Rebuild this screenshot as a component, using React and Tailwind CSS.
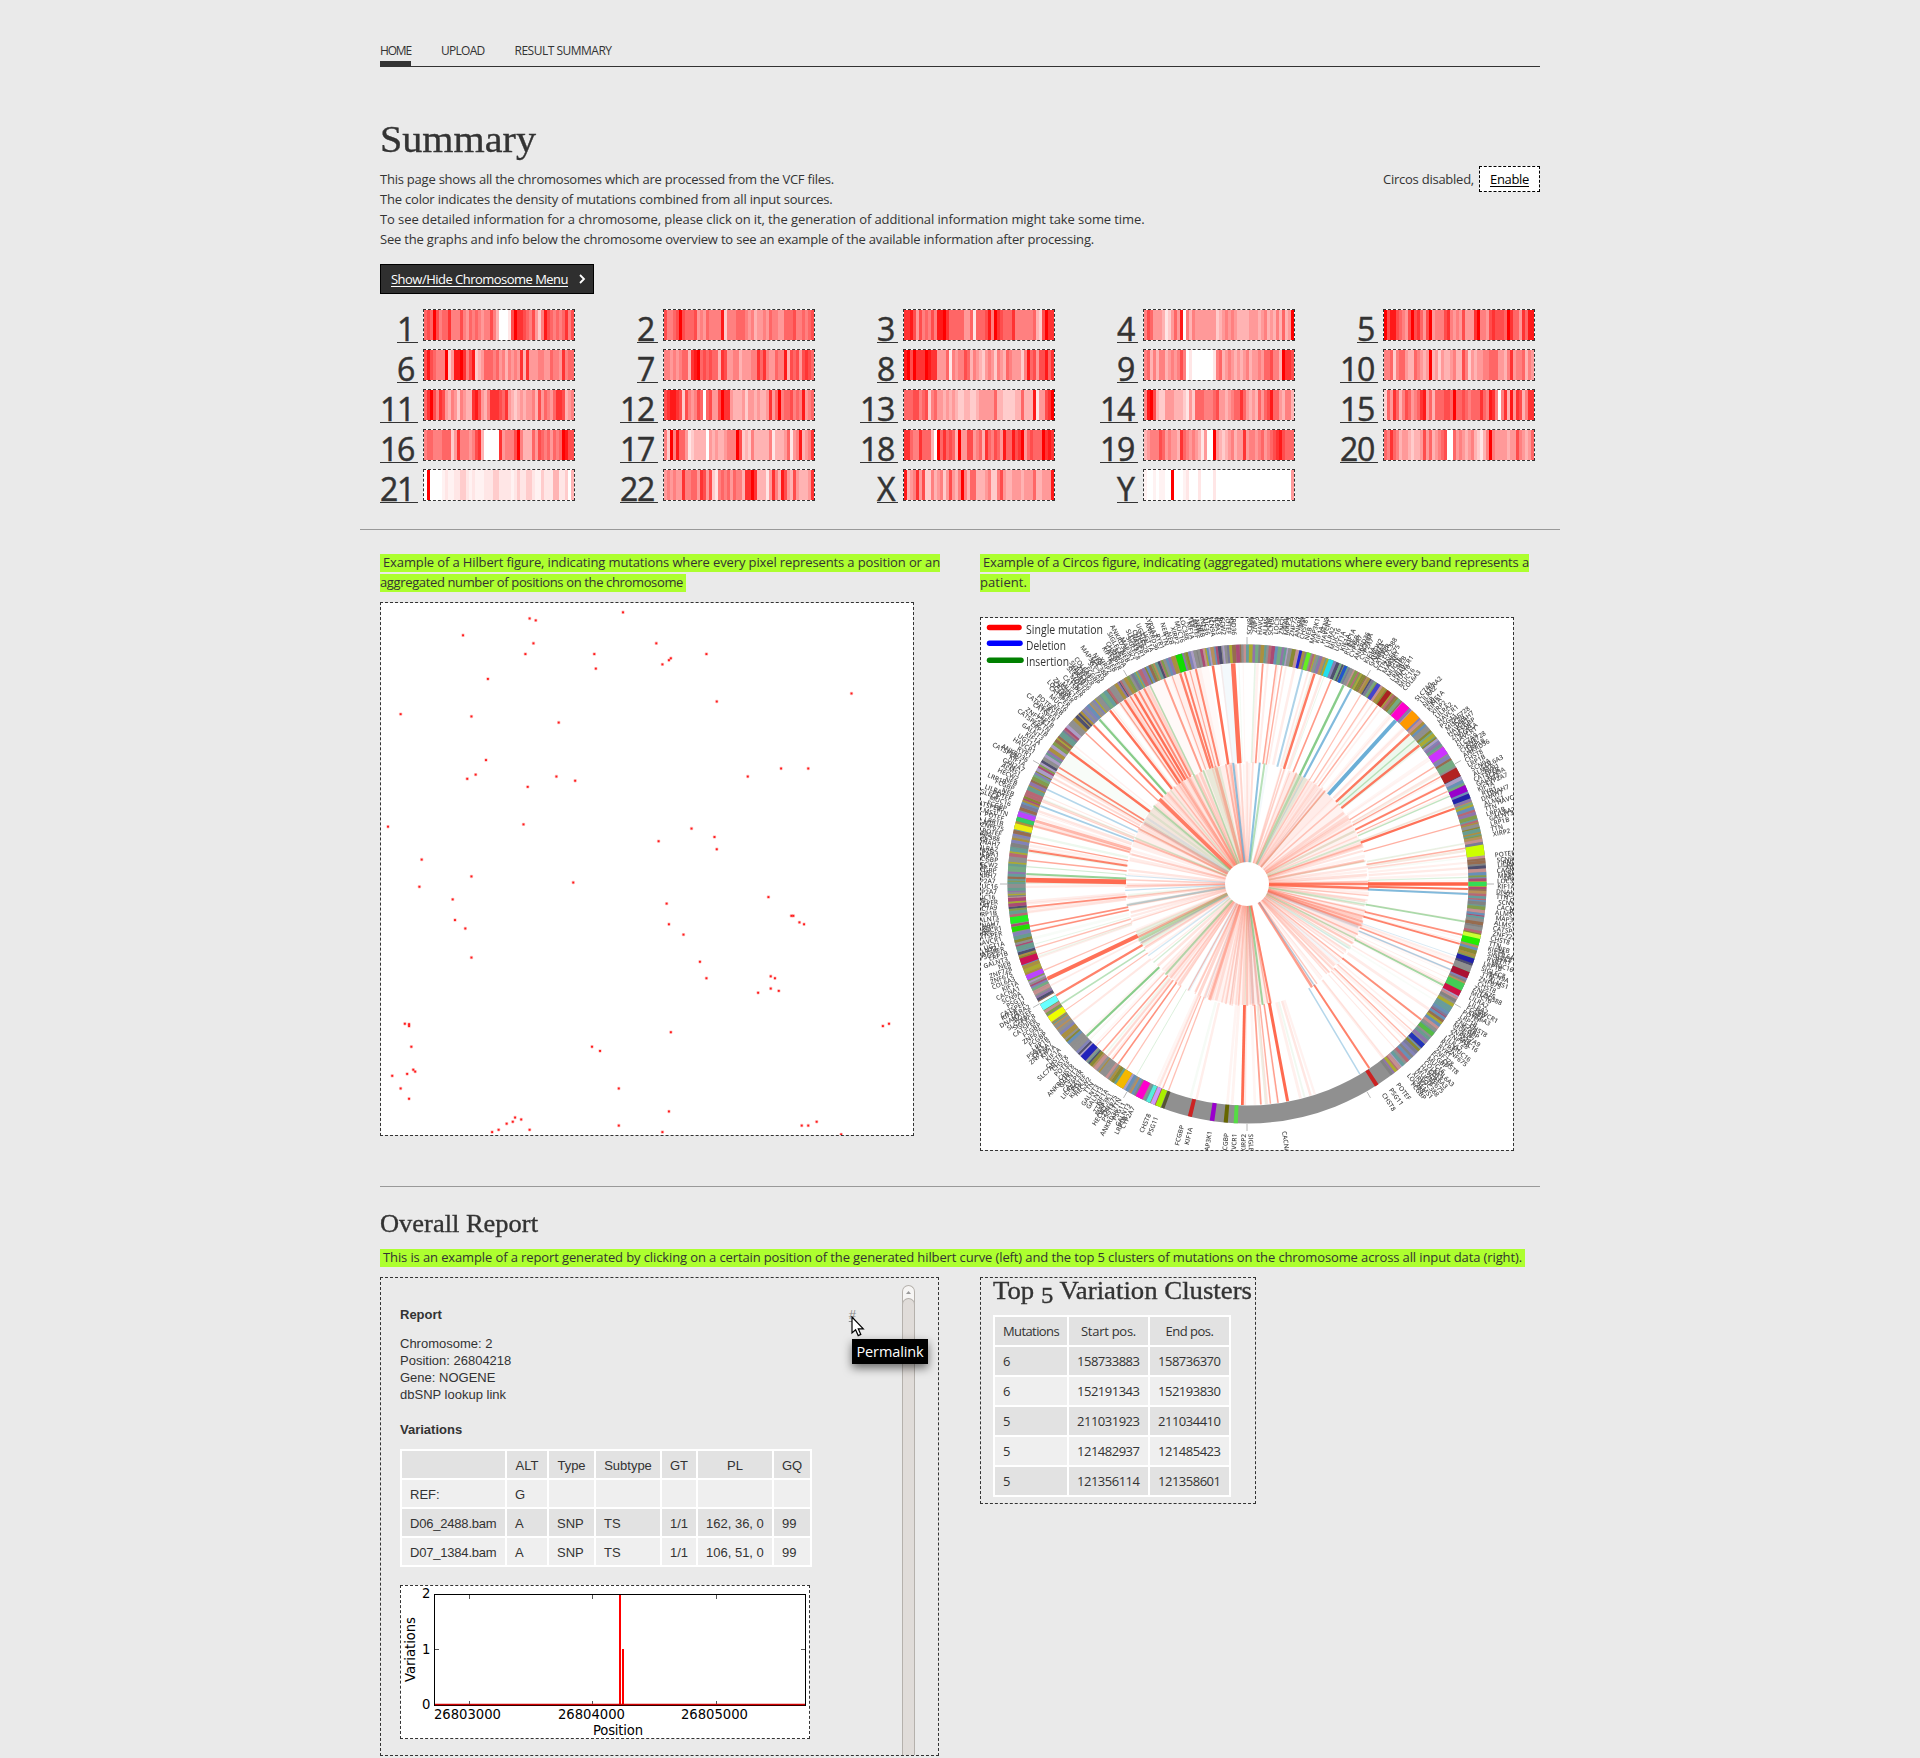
import { useLayoutEffect, useRef } from "react";

const sans = 'font-["Open_Sans",sans-serif]';
const serif = 'font-["Liberation_Serif",serif] [-webkit-text-stroke:0.35px_#333]';

/* Text set to a given measure: spreads the difference over its letters,
   or widens the letters themselves when `stretch` is set. */
function Fit({ w, stretch = false, className = "", children }) {
  const ref = useRef(null);
  useLayoutEffect(() => {
    const el = ref.current;
    const fit = () => {
      el.style.letterSpacing = "0px";
      el.style.transform = "none";
      const natural = el.getBoundingClientRect().width;
      if (stretch) el.style.transform = `scaleX(${w / natural})`;
      else el.style.letterSpacing = (w - natural) / el.textContent.length + "px";
    };
    fit();
    document.fonts?.ready.then(fit);
  }, [w, stretch]);
  return (
    <span ref={ref} className={"inline-block origin-left whitespace-nowrap " + className}>
      {children}
    </span>
  );
}

/* Density of each of the 50 bins: 0 (white) to a (red), "." is half a step. */
const chromosomes = [
  ["1", "676a7 56685 55754 65654 55753 00017 a8876 57425 97656 56857"],
  ["2", "75567 a7666 74546 55559 25556 66545 34454 65544 66675 56567"],
  ["3", "88974 75657 599a8 66666 44616 66795 a8766 68555 55563 27a88"],
  ["4", "57644 43124 64905 35444 44442 34545 43333 44434 53435 3634a"],
  ["5", "a7997 6547a 78647 a4555 78545 47444 8a554 78777 6a866 48699"],
  ["6", "79765 55a24 99a85 79234 66656 45354 54838 44455 44655 48566"],
  ["7", "55454 56638 9a676 76638 74455 34445 58685 44655 93767 47876"],
  ["8", "9a7a8 88a98 84446 15455 76354 32454 25436 54442 59674 77968"],
  ["9", "56353 55345 45750 10000 00015 63454 34345 34454 66755 3a887"],
  ["10", "55625 66433 65434 a3424 33453 37524 34455 66644 35845 56354"],
  ["11", "68a75 87435 42543 38974 35888 76843 23434 45374 65468 87345"],
  ["12", "78998 72754 57606 7447a 88433 34244 34334 846a5 66756 59456"],
  ["13", "66677 56725 64434 34322 33223 44444 63322 22336 33391 4478a"],
  ["14", "59a73 22444 33321 42666 55567 44345 66864 34364 67966 43553"],
  ["15", "26486 35764 56894 63666 776a6 67656 66865 98505 83948 73588"],
  ["16", "56655 56662 48555 45783 00000 84555 7a533 36476 56465 6a977"],
  ["17", "52a59 66412 33330 43433 4555a 72325 33333 51333 46145 93458"],
  ["18", "88655 86663 0a686 763a4 47745 63865 76496 6978a 46766 6a898"],
  ["19", "34555 76454 43865 45431 400a4 32345 34484 55456 45678 97666"],
  ["20", "65865 34432 33474 63456 70064 54345 32135 a5444 43447 54346"],
  ["21", "0a000 0.1.. 11221 .1... 11122 1111. 12112 21..2 11133 11203"],
  ["22", "45454 48556 64874 72156 56465 5388a 83331 48539 74374 33348"],
  ["X", "93458 47225 34524 7435a 53663 33452 25743 34443 44463 34449"],
  ["Y", ".00.0 ..00a 000.1 00010 00010 00000 00000 00000 00000 00004"],
];

function Chromosome({ name, bins }) {
  return (
    <a className="flex h-10 gap-[5px] text-[#333]">
      <span className="flex w-[38px] justify-end">
        <span className="h-[34px] border-b border-[#333] pr-1 text-[32px] leading-[39px] [-webkit-text-stroke:0.5px_#333]">
          <Fit w={name.length * 17}>{name}</Fit>
        </span>
      </span>
      <span className="flex h-8 w-[152px] border border-dashed border-[#333] bg-white">
        {[...bins.replaceAll(" ", "")].map((c, i) => {
          const v = Math.round(255 * (1 - (c === "." ? 0.05 : parseInt(c, 16) / 10)));
          return <i key={i} className="h-full w-[3px]" style={{ background: `rgb(255,${v},${v})` }} />;
        })}
      </span>
    </a>
  );
}

const hits = [
  [661, 189], [417, 205], [433, 210], [243, 249], [427, 270], [406, 298], [586, 298], [590, 336], [748, 270], [786, 309],
  [781, 314], [764, 325], [879, 298], [308, 363], [1258, 401], [906, 422], [80, 455], [265, 461], [493, 477], [303, 575],
  [276, 613], [254, 624], [487, 618], [536, 629], [412, 645], [1074, 597], [1145, 597], [987, 618], [47, 749], [401, 743],
  [840, 754], [754, 787], [900, 776], [906, 808], [135, 835], [265, 879], [129, 906], [531, 895], [216, 939], [1041, 933],
  [222, 993], [249, 1015], [775, 950], [781, 1004], [819, 1031], [1101, 982], [1106, 982], [1122, 999], [1134, 1004],
  [265, 1091], [862, 1102], [879, 1145], [1047, 1140], [1058, 1145], [1047, 1172], [1068, 1178], [1014, 1183], [91, 1264],
  [102, 1265], [102, 1270], [108, 1324], [1340, 1270], [1356, 1264], [786, 1286], [580, 1324], [601, 1335], [113, 1384],
  [118, 1389], [97, 1395], [58, 1400], [80, 1433], [102, 1460], [650, 1433], [781, 1493], [379, 1509], [395, 1514],
  [373, 1520], [357, 1525], [336, 1541], [319, 1547], [417, 1541], [650, 1530], [764, 1547], [1128, 1530], [1145, 1530],
  [1167, 1520], [1231, 1553],
];

function Hilbert() {
  return (
    <svg className="block size-[532px] bg-white" viewBox="28.7 164.6 1390 1390">
      {hits.map(([x, y], i) => (
        <g key={i}>
          <rect x={x - 4.5} y={y - 4.5} width="9" height="9" rx="3" fill="#ff2020" opacity="0.25" />
          <rect x={x - 2.5} y={y - 2.5} width="5" height="5" fill="#ff1a1a" />
        </g>
      ))}
    </svg>
  );
}

const random = (seed) => () => {
  seed = (seed * 16807) % 2147483647;
  return seed / 2147483647;
};
const at = (deg, r) => {
  const a = (deg * Math.PI) / 180;
  return [(266 + r * Math.sin(a)).toFixed(2), (266 - r * Math.cos(a)).toFixed(2)];
};
const RED = "#ff6347";
const BLUE = "#6baed6";
const GREEN = "#74c476";

/* angle (clockwise from the top), colour, width, opacity */
const outerRays = [
  [-3.6, RED, 4.5, 0.9], [-8.9, RED, 2.6, 0.9], [-13.4, RED, 2, 0.75], [-16.4, RED, 2, 0.8], [-17.6, RED, 2.4, 0.8],
  [-15, RED, 1.2, 0.5], [-22, RED, 2, 0.6], [-19.8, RED, 1.2, 0.4], [-27.8, RED, 2, 0.7], [-29.3, RED, 2, 0.7],
  [-30.6, RED, 2.4, 0.9], [-31.9, RED, 1.6, 0.8], [-33.6, RED, 2.4, 0.9], [-35, RED, 1.2, 0.5], [-38.3, RED, 2.4, 0.9],
  [-44, RED, 2, 0.8], [-46.9, RED, 1.5, 0.6], [-53.3, RED, 2.4, 0.9], [-58.2, RED, 1.8, 0.75], [-59.6, RED, 1.4, 0.6],
  [-62.5, RED, 1.2, 0.5], [-73.4, RED, 3, 0.45], [-74.8, RED, 1.8, 0.4], [-79, RED, 1.4, 0.6], [-81.3, RED, 2, 0.8],
  [-83.8, RED, 1.5, 0.55], [-89, RED, 4.6, 0.95], [-96, RED, 1.8, 0.7], [-101, RED, 1.6, 0.7], [-102.4, RED, 1.6, 0.7],
  [-106.8, RED, 1.4, 0.35], [-108.6, RED, 1.2, 0.25], [-113, RED, 1.2, 0.4], [-115.4, RED, 4, 0.9], [-120.3, RED, 2.2, 0.8],
  [-124.8, RED, 1.2, 0.4], [-137, RED, 1.2, 0.3], [-139.2, RED, 1.6, 0.6], [-142.5, RED, 1.3, 0.5], [-144.4, RED, 1.6, 0.7],
  [-147, RED, 1.2, 0.4], [-157.6, RED, 1.2, 0.4], [-159.2, RED, 1.3, 0.4], [-178.8, RED, 2.8, 0.95], [176.4, RED, 1.8, 0.6],
  [173.9, RED, 1.5, 0.5], [171.9, RED, 1.5, 0.6], [169.4, RED, 3, 0.95], [146.4, RED, 2, 0.8], [136, RED, 1.2, 0.25],
  [134, RED, 1.3, 0.4], [131.6, RED, 1.3, 0.3], [127.9, RED, 2, 0.7], [111.2, RED, 1.6, 0.6], [105.7, RED, 1.8, 0.8],
  [103.3, RED, 1.8, 0.7], [90, RED, 3.4, 1], [91.3, RED, 1.8, 0.9], [80.7, RED, 1.4, 0.5], [74.5, RED, 1.4, 0.5],
  [70, RED, 2.2, 0.9], [65.2, RED, 1.3, 0.5], [63.4, RED, 2, 0.8], [61, RED, 1.2, 0.5], [58, RED, 1.3, 0.5],
  [51.2, RED, 2.4, 0.85], [47.3, RED, 2.4, 0.85], [36.2, RED, 1.5, 0.5], [33.3, RED, 1.3, 0.4], [31, RED, 1.2, 0.4],
  [22.4, RED, 1.6, 0.6], [17.8, RED, 2.4, 0.85], [9.1, RED, 1.4, 0.5], [7.6, RED, 1.5, 0.55], [4.1, RED, 1.8, 0.65],
  [-64.7, BLUE, 1.5, 0.5], [-69.3, BLUE, 1.8, 0.6], [92.6, BLUE, 2, 0.85], [42.3, BLUE, 3.8, 1], [28.1, BLUE, 2.2, 0.85],
  [14.5, BLUE, 2, 0.55], [112.8, BLUE, 1.5, 0.55], [149.3, BLUE, 1.5, 0.5], [109, BLUE, 1, 0.25], [-41.9, GREEN, 2.2, 0.85],
  [-26, GREEN, 1.5, 0.5], [-87.4, GREEN, 2, 0.75], [-85.5, GREEN, 1.2, 0.3], [-133.5, GREEN, 2.2, 0.85],
  [-122.8, GREEN, 1.6, 0.5], [117.3, GREEN, 1.8, 0.65], [99.8, GREEN, 1.8, 0.6], [25.9, GREEN, 2.4, 0.85],
  [49.4, GREEN, 1.4, 0.45], [66.6, GREEN, 1.4, 0.45], [88.3, GREEN, 1.2, 0.25], [-150, GREEN, 1, 0.25], [2.1, GREEN, 1.6, 0.18],
];
const innerRays = [
  [-6.5, BLUE, 2, 0.9], [6, BLUE, 2, 0.9], [8.3, GREEN, 2, 0.6], [-10, RED, 1.8, 0.5], [-15, RED, 3.2, 0.35],
  [-21, GREEN, 1.5, 0.5], [-45.9, RED, 3.6, 0.95], [-50, GREEN, 1.8, 0.6], [-63, RED, 2, 0.45], [-69, RED, 1.8, 0.45],
  [-67.5, GREEN, 1.4, 0.35], [-116, RED, 2.4, 0.6], [-117.5, GREEN, 3.4, 0.5], [-119, BLUE, 1.3, 0.35], [-138, GREEN, 2, 0.6],
  [-144, RED, 1.6, 0.35], [-156.6, RED, 3, 0.3], [-162, RED, 3, 0.3], [-170, RED, 1.6, 0.3], [-172, RED, 1.4, 0.25],
  [-176, RED, 1.8, 0.35], [180, RED, 2.4, 0.35], [177, RED, 2.4, 0.35], [174.5, RED, 2, 0.35], [172.6, GREEN, 2, 0.8],
  [168.8, RED, 2, 0.9], [170.2, RED, 1.4, 0.4], [147.8, RED, 2.4, 0.7], [146.4, BLUE, 1.3, 0.6], [145, RED, 1.4, 0.4],
  [90, RED, 2.6, 0.95], [92, RED, 2.4, 0.95], [95.5, RED, 1.3, 0.4], [99.8, GREEN, 1.6, 0.4], [103, RED, 1.4, 0.4],
  [105.5, RED, 1.8, 0.5], [108, RED, 2, 0.5], [110, RED, 1.8, 0.5], [116.8, GREEN, 1.6, 0.5], [114.5, RED, 1.6, 0.4],
  [128, RED, 1.4, 0.5], [49, RED, 1.6, 0.4], [68.8, GREEN, 1.8, 0.35], [71, RED, 1.6, 0.4], [61, RED, 1.5, 0.35],
  [40, RED, 1.6, 0.4], [26, GREEN, 2.4, 0.5], [28, BLUE, 1.2, 0.3], [24, RED, 1.6, 0.4], [18, RED, 1.6, 0.3],
  [-88, RED, 1.6, 0.35], [-91.5, RED, 1.3, 0.3], [-86, BLUE, 1.2, 0.35], [-93, BLUE, 1.2, 0.45], [-100, BLUE, 1.4, 0.4],
  [-96, RED, 1.4, 0.25], [-108, RED, 1.4, 0.25], [-126, BLUE, 1.4, 0.35], [-130, GREEN, 1.4, 0.35], [-29, RED, 2.2, 0.45],
  [-33, RED, 2.2, 0.5], [-26, GREEN, 1.8, 0.5], [-37, RED, 1.5, 0.4], [-41, RED, 1.2, 0.3],
];
/* start, end, inner radius, outer radius, colour, opacity */
const wedges = [
  [-62, -44, 19, 121, RED, 0.14], [-44, -24, 19, 121, RED, 0.16], [-24, -9, 19, 121, RED, 0.1], [-60, -50, 19, 121, GREEN, 0.08],
  [-20, -14, 19, 121, GREEN, 0.16], [20, 46, 19, 121, RED, 0.12], [46, 72, 19, 121, RED, 0.08], [24, 30, 19, 121, GREEN, 0.16],
  [102, 117, 19, 121, RED, 0.12], [-121, -113, 19, 121, GREEN, 0.18], [-72, -62, 19, 121, RED, 0.1], [-146, -135, 19, 121, RED, 0.08],
  [-180, -160, 19, 121, RED, 0.07], [168, 180, 19, 121, RED, 0.1], [-35, -26, 122, 221, RED, 0.12], [-20, -12, 122, 221, RED, 0.06],
  [47, 52, 122, 221, GREEN, 0.12], [-60, -52, 122, 221, GREEN, 0.05], [-7, -4, 122, 221, BLUE, 0.08], [-34, -10, 122, 221, RED, 0.04],
];
/* angle, colour, span in degrees */
const bands = [
  [41.6, "#ff00cc", 2.2], [44.8, "#ff9900", 2.4], [56, "#cc33ff", 2], [62, "#b22222", 2.2], [66.4, "#9900cc", 1.6],
  [68.4, "#2222aa", 1.2], [81.8, "#ccff00", 2.6], [104, "#22ee00", 1.8], [102.8, "#ccff33", 1], [108.8, "#2222aa", 1.2],
  [112.4, "#aa1133", 1.6], [115.6, "#44cc55", 2], [117.2, "#cc1144", 1.4], [90, "#33dd55", 1], [-16.6, "#11dd00", 1.6],
  [-76, "#eeee11", 1.4], [-73, "#bb44ff", 1.2], [-74.2, "#33cc66", 1], [-98.8, "#22ee22", 1.6], [-101, "#22dd00", 1.2],
  [-109, "#cc1155", 1.6], [-113, "#bb44ff", 1.2], [-121, "#66ffff", 1.6], [-119.8, "#ffffff", 0.6], [-124.4, "#eeff00", 1.6],
  [-136.8, "#2222bb", 1.6], [-147.8, "#f4b800", 2], [-153.2, "#ff00cc", 1.8], [-155.6, "#55eedd", 1], [-156.8, "#cc99ff", 1],
  [-158.2, "#aaee00", 1.4], [-159.4, "#555533", 0.8], [-166.2, "#cc2222", 1], [-171.6, "#9900cc", 1.1], [-174.9, "#666600", 1],
  [-177.3, "#55dd44", 1], [147.2, "#cc2222", 1], [36.5, "#aa2222", 1.2], [33.4, "#4444cc", 1], [20.6, "#22ddee", 1.2],
  [24.4, "#2255cc", 0.8], [15, "#66ee22", 1], [13, "#2222cc", 0.7], [129, "#55bb44", 1], [132.6, "#2233bb", 1.2],
];
const palette = [
  "#8080c0", "#b09030", "#60a090", "#c06070", "#9070b0", "#80a040", "#6090c0", "#c09050", "#808080", "#909090", "#b0b020",
  "#b04070", "#70b080", "#8f8f8f", "#777799", "#b0a0d0", "#996644", "#888822", "#d09090", "#5fa0a0", "#909090", "#44446a",
];
const genes = [
  "MAP3K1", "CACNA1", "ZNF675", "TTN", "MUC16", "HECW2", "COL6A3", "LRP1B", "NEB", "SCN9A", "GALNT3", "KIF1A", "POTEF",
  "ANKRD36", "CATSPER", "CHST8", "CYP2A7", "PSG11", "FCGBP", "RYR1", "SIGLEC8", "LILRA2", "ZNF728", "HAVCR1", "DNAH7",
  "ALMS1", "XIRP2", "SLC7A9", "LOC388", "UGT1A",
];

function sector(a0, a1, r0, r1) {
  const [x0, y0] = at(a0, r1), [x1, y1] = at(a1, r1), [x2, y2] = at(a1, r0), [x3, y3] = at(a0, r0);
  return `M${x0} ${y0}A${r1} ${r1} 0 0 1 ${x1} ${y1}L${x2} ${y2}A${r0} ${r0} 0 0 0 ${x3} ${y3}Z`;
}
function Ray({ a, r0, r1, c, w, o }) {
  const [x1, y1] = at(a, r0), [x2, y2] = at(a, r1);
  return <line x1={x1} y1={y1} x2={x2} y2={y2} stroke={c} strokeWidth={w} opacity={o} />;
}

function Circos() {
  const rnd = random(4711);
  const segments = [];
  for (let a = -159; a < 143; ) {
    const w = 0.25 + rnd() * 0.7;
    segments.push(<path key={a} d={sector(a, a + w, 221.5, 239.5)} fill={palette[Math.floor(rnd() * palette.length)]} />);
    a += w;
  }
  const faint = [];
  for (let i = 0; i < 150; i++) {
    const a = -200 + rnd() * 344;
    faint.push(<Ray key={"o" + i} a={a} r0={122} r1={221} c={rnd() < 0.85 ? RED : GREEN} w={0.8 + rnd() * 2} o={0.04 + rnd() * 0.12} />);
  }
  for (let i = 0; i < 200; i++) {
    const a = -191 + rnd() * 339;
    const c = rnd();
    faint.push(<Ray key={"i" + i} a={a} r0={19} r1={119 + rnd() * 4} c={c < 0.86 ? RED : c < 0.95 ? GREEN : BLUE} w={0.9 + rnd() * 2} o={0.06 + rnd() * 0.16} />);
  }
  const labels = [];
  const label = (a, r, key) => {
    const [x, y] = at(a, r);
    const left = ((a + 360) % 360) > 180;
    labels.push(
      <text key={key} transform={`translate(${x} ${y}) rotate(${left ? a + 90 : a - 90})`} textAnchor={left ? "end" : "start"} dy="2">
        {genes[Math.floor(rnd() * genes.length)]}
      </text>
    );
  };
  for (let a = -153; a < 140; a += 1.2) {
    if (a > -2 && a < 0.5) continue;
    if (a > 39 && a < 42) continue;
    if (a > 79.5 && a < 82.5) continue;
    label(a, 249 + rnd() * 3, "l" + a);
    if (rnd() < 0.5) label(a + 0.6, 256 + rnd() * 8, "m" + a);
  }
  [-157, -158.8, -165, -167, -171.5, -175.3, -177.2, -179.3, 179.2, 171.5, 143, 145, 147].forEach((a) => label(a, 250, "s" + a));
  return (
    <svg className='block size-[532px] bg-white font-["Open_Sans",sans-serif]' viewBox="0 0 532 532">
      <g className="blur-[0.6px]">
        <g fontSize="6.5" fontWeight="600" fill="#2a2a2a" opacity="0.85">{labels}</g>
        {wedges.map(([a0, a1, r0, r1, c, o], i) => <path key={i} d={sector(a0, a1, r0, r1)} fill={c} opacity={o} />)}
        <g>{faint}</g>
        {outerRays.map(([a, c, w, o], i) => <Ray key={i} a={a} r0={121} r1={221} c={c} w={w} o={o} />)}
        {innerRays.map(([a, c, w, o], i) => <Ray key={i} a={a} r0={19} r1={122} c={c} w={w} o={o * 0.85} />)}
        <circle cx="266" cy="266" r="22" fill="#fff" />
        <circle cx="266" cy="266" r="230.5" fill="none" stroke="#909090" strokeWidth="18" />
        <g opacity="0.85">{segments}</g>
        {bands.map(([a, c, s]) => <path key={a} d={sector(a - s / 2, a + s / 2, 221.5, 239.5)} fill={c} />)}
        {[-180, -150, -120, -90, -60, -30, 0, 30, 60, 90, 120, 150].map((a) => (
          <Ray key={a} a={a} r0={240} r1={247} c="#888" w={1} o={0.6} />
        ))}
        <g strokeWidth="5.500" strokeLinecap="round">
          <path d="M8.500 9.500H38" stroke="#f00" />
          <path d="M8.500 25.300H39" stroke="#00f" />
          <path d="M8.500 42.300H40" stroke="#008000" />
        </g>
        <g fontSize="12" fill="#333">
          <text x="45" y="15.500" textLength="77" lengthAdjust="spacingAndGlyphs">Single mutation</text>
          <text x="45" y="31.500" textLength="40" lengthAdjust="spacingAndGlyphs">Deletion</text>
          <text x="45" y="47.500" textLength="43" lengthAdjust="spacingAndGlyphs">Insertion</text>
        </g>
      </g>
    </svg>
  );
}

function Plot() {
  return (
    <svg className='mt-[18px] block h-[154px] w-[410px] border border-dashed border-[#333] bg-white font-["DejaVu_Sans",sans-serif] text-[13.2px]' viewBox="0 0 408 152">
      <path d="M219 9V119M222 63V119" stroke="#f00" strokeWidth="2" />
      <rect x="33.500" y="8.500" width="371" height="111" fill="none" stroke="#000" />
      <path d="M34 118.500H404" stroke="#d00000" strokeWidth="1.500" />
      <path d="M68.500 9v4M191.500 9v4M315.500 9v4M68.500 118v-3M191.500 118v-3M315.500 118v-3M34 63.500h4M404 63.500h-4" stroke="#555" />
      <text x="21" y="12">2</text>
      <text x="21" y="68">1</text>
      <text x="21" y="123">0</text>
      <text x="33" y="133" textLength="67">26803000</text>
      <text x="157" y="133" textLength="67">26804000</text>
      <text x="280" y="133" textLength="67">26805000</text>
      <text x="192" y="148.500" textLength="50">Position</text>
      <text transform="translate(14 96) rotate(-90)" textLength="65">Variations</text>
    </svg>
  );
}

function Highlight({ w, className = "", children }) {
  return (
    <span className={"block h-[18px] w-fit bg-[#adff2f] leading-[17px] " + className}>
      <Fit w={w}>{children}</Fit>
    </span>
  );
}

const variations = [
  ["", "ALT", "Type", "Subtype", "GT", "PL", "GQ"],
  ["REF:", "G", "", "", "", "", ""],
  ["D06_2488.bam", "A", "SNP", "TS", "1/1", "162, 36, 0", "99"],
  ["D07_1384.bam", "A", "SNP", "TS", "1/1", "106, 51, 0", "99"],
];
const clusters = [
  ["6", "158733883", "158736370"],
  ["6", "152191343", "152193830"],
  ["5", "211031923", "211034410"],
  ["5", "121482937", "121485423"],
  ["5", "121356114", "121358601"],
];

export default function App() {
  return (
    <div className={"min-h-[1758px] bg-[#eaeaea] text-[13px] leading-5 text-[#333] " + sans}>
      <main className="mx-auto w-[1160px]">
        <nav className="flex h-[67px] items-end gap-[30px] border-b border-[#333] text-xs leading-[22px]">
          <a className="-mb-px h-[27px] border-b-[6px] border-[#333]"><Fit w={31}>HOME</Fit></a>
          <a className="-mb-px h-[27px]"><Fit w={43.5}>UPLOAD</Fit></a>
          <a className="-mb-px h-[27px]"><Fit w={97}>RESULT SUMMARY</Fit></a>
        </nav>

        <h1 className={"mt-[52px] h-10 text-[38px] leading-10 " + serif}><Fit w={156} stretch>Summary</Fit></h1>

        <div className="mt-[10px] flex items-start justify-between">
          <p className="flex flex-col items-start">
            <Fit w={454}>This page shows all the chromosomes which are processed from the VCF files.</Fit>
            <Fit w={452.5}>The color indicates the density of mutations combined from all input sources.</Fit>
            <Fit w={764.5}>To see detailed information for a chromosome, please click on it, the generation of additional information might take some time.</Fit>
            <Fit w={714}>See the graphs and info below the chromosome overview to see an example of the available information after processing.</Fit>
          </p>
          <div className="-mt-[3px] flex items-center gap-[5px]">
            <Fit w={91}>Circos disabled,</Fit>
            <a className="flex h-[26px] w-[61px] items-center justify-center border border-dashed border-black bg-white text-black underline underline-offset-2">
              <Fit w={39}>Enable</Fit>
            </a>
          </div>
        </div>

        <button className="mt-[15px] flex h-[30px] w-[214px] items-center border border-black bg-[#2f2f2f] pl-[10px] text-white">
          <Fit w={177} className="underline underline-offset-2">Show/Hide Chromosome Menu</Fit>
          <svg className="ml-[11px] h-[10px] w-[7px]" viewBox="0 0 7 10" fill="none" stroke="#fff" strokeWidth="1.800">
            <path d="M1 1l4 4-4 4" />
          </svg>
        </button>

        <section className="mt-[15px] grid grid-cols-[repeat(5,240px)]">
          {chromosomes.map(([name, bins]) => <Chromosome key={name} name={name} bins={bins} />)}
        </section>

        <hr className="-mx-5 mt-5 border-0 border-t border-[#999]" />

        <section className="mt-6 grid grid-cols-[600px_560px] items-start">
          <figure>
            <figcaption className="flex flex-col gap-[2px]">
              <Highlight w={557} className="pl-[3px]">Example of a Hilbert figure, indicating mutations where every pixel represents a position or an</Highlight>
              <Highlight w={303} className="pr-[3px]">aggregated number of positions on the chromosome</Highlight>
            </figcaption>
            <div className="mt-[10px] size-[534px] border border-dashed border-[#333]"><Hilbert /></div>
          </figure>
          <figure>
            <figcaption className="flex flex-col gap-[2px]">
              <Highlight w={546} className="pl-[3px]">Example of a Circos figure, indicating (aggregated) mutations where every band represents a</Highlight>
              <Highlight w={47} className="pr-[3px]">patient.</Highlight>
            </figcaption>
            <div className="mt-[25px] size-[534px] overflow-hidden border border-dashed border-[#333]"><Circos /></div>
          </figure>
        </section>

        <hr className="mt-[35px] border-0 border-t border-[#999]" />

        <h2 className={"mt-[21px] h-[30px] text-[26px] leading-[32px] " + serif}><Fit w={158} stretch>Overall Report</Fit></h2>
        <Highlight w={1139} className="mt-[11px] px-[3px]">This is an example of a report generated by clicking on a certain position of the generated hilbert curve (left) and the top 5 clusters of mutations on the chromosome across all input data (right).</Highlight>

        <section className="mt-[10px] flex items-start gap-[41px]">
          <div className='relative flex h-[479px] w-[559px] justify-between border border-dashed border-[#333] pr-[23px] pl-[19px] font-["Liberation_Sans",sans-serif] leading-[17px]'>
            <div className="mt-7 w-[456px]">
              <div className="flex justify-between">
                <b>Report</b>
                <a className="text-[#888] underline underline-offset-2">#</a>
              </div>
              <p className="mt-3">Chromosome: 2<br />Position: 26804218<br />Gene: NOGENE<br />dbSNP lookup link</p>
              <b className="mt-[18px] block">Variations</b>
              <div className="mt-[11px] grid w-[412px] grid-cols-[103px_40px_45px_64px_34px_74px_36px] gap-[2px] border-2 border-white bg-white leading-[29px]">
                {variations.map((row, r) =>
                  row.map((cell, c) => (
                    <span key={r + "-" + c} className={"h-[27px] whitespace-nowrap " + (r === 0 ? "text-center " : "pl-2 ") + (r % 2 ? "bg-[#efefef]" : "bg-[#e2e2e2]")}>
                      {c === 0 && r > 1 ? <Fit w={86.5}>{cell}</Fit> : cell}
                    </span>
                  ))
                )}
              </div>
              <Plot />
            </div>
            <div className="mt-[7px] w-[13px] rounded-t-full border-x border-t border-[#b5b1ac] bg-[#f6f5f4]">
              <svg className="mx-auto mt-[5px] block h-[3px] w-[5px]" viewBox="0 0 5 3"><path d="M0 3L2.500 0L5 3Z" fill="#999" /></svg>
              <div className="-mx-px mt-[4px] h-[457px] rounded-t-full border-x border-t border-[#b5b1ac] bg-[#e0dcd9]" />
            </div>
            <svg className="absolute top-[38px] left-[470px] h-[21px] w-[14px]" viewBox="0 0 14 21">
              <path d="M1 1V17L4.600 13.800L7.200 19.600L9.800 18.400L7.300 12.800H12.300Z" fill="#fff" stroke="#000" strokeWidth="1.200" />
            </svg>
            <div className='absolute top-[61px] left-[471px] flex h-[25px] w-[76px] items-center justify-center bg-black font-["Open_Sans",sans-serif] text-[14.500px] text-white shadow-[0_4px_10px_rgba(0,0,0,0.55)]'>
              <Fit w={67}>Permalink</Fit>
            </div>
          </div>

          <div className="h-[227px] w-[276px] border border-dashed border-[#333] pl-3">
            <h2 className={"mt-[-3px] h-[30px] text-[26px] leading-[32px] " + serif}>
              <Fit w={259} stretch>Top <span className="relative top-1 text-[24px]">5</span> Variation Clusters</Fit>
            </h2>
            <div className="mt-[10px] grid w-[238px] grid-cols-[72px_79px_79px] gap-[2px] border-2 border-white bg-white leading-7">
              <span className="h-7 bg-[#e2e2e2] text-center"><Fit w={56}>Mutations</Fit></span>
              <span className="h-7 bg-[#e2e2e2] text-center"><Fit w={55}>Start pos.</Fit></span>
              <span className="h-7 bg-[#e2e2e2] text-center"><Fit w={48}>End pos.</Fit></span>
              {clusters.map((row, r) =>
                row.map((cell, c) => (
                  <span key={r + "-" + c} className={"h-7 pl-2 " + (r % 2 ? "bg-[#efefef]" : "bg-[#e2e2e2]")}>
                    <Fit w={c ? 62.5 : 7}>{cell}</Fit>
                  </span>
                ))
              )}
            </div>
          </div>
        </section>
      </main>
    </div>
  );
}
